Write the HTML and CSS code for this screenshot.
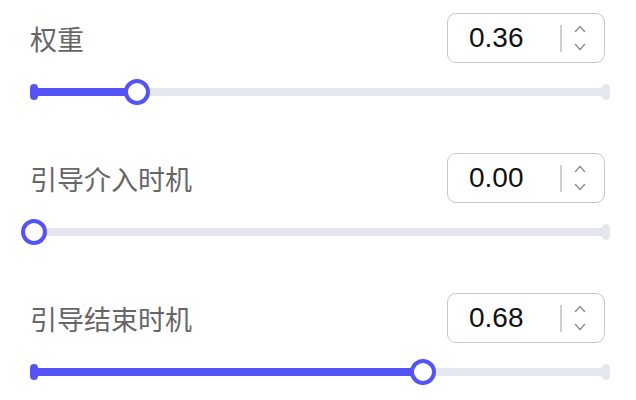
FILE: index.html
```html
<!DOCTYPE html>
<html lang="zh-CN">
<head>
    <meta charset="UTF-8">
    <meta name="viewport" content="width=device-width, initial-scale=1.0">
    <title>引导参数</title>
    <link rel="stylesheet" href="styles.css">
</head>
<body>
    <div class="panel">
        <div class="row">
            <div class="row-head">
                <span class="label">权重</span>
                <div class="number-input">
                    <span class="value">0.36</span>
                    <span class="divider"></span>
                    <span class="stepper">
                        <svg width="12" height="8" viewBox="0 0 12 8"><polyline points="1.5,6.5 6,1.5 10.5,6.5"/></svg>
                        <svg width="12" height="8" viewBox="0 0 12 8"><polyline points="1.5,1.5 6,6.5 10.5,1.5"/></svg>
                    </span>
                </div>
            </div>
            <div class="slider">
                <span class="track"></span>
                <span class="cap cap-start on"></span>
                <span class="cap cap-end"></span>
                <div class="rail">
                    <span class="fill" style="width: 18%"></span>
                    <span class="thumb" style="left: 18%"></span>
                </div>
            </div>
        </div>

        <div class="row">
            <div class="row-head">
                <span class="label">引导介入时机</span>
                <div class="number-input">
                    <span class="value">0.00</span>
                    <span class="divider"></span>
                    <span class="stepper">
                        <svg width="12" height="8" viewBox="0 0 12 8"><polyline points="1.5,6.5 6,1.5 10.5,6.5"/></svg>
                        <svg width="12" height="8" viewBox="0 0 12 8"><polyline points="1.5,1.5 6,6.5 10.5,1.5"/></svg>
                    </span>
                </div>
            </div>
            <div class="slider">
                <span class="track"></span>
                <span class="cap cap-start"></span>
                <span class="cap cap-end"></span>
                <div class="rail">
                    <span class="fill" style="width: 0%"></span>
                    <span class="thumb" style="left: 0%"></span>
                </div>
            </div>
        </div>

        <div class="row">
            <div class="row-head">
                <span class="label">引导结束时机</span>
                <div class="number-input">
                    <span class="value">0.68</span>
                    <span class="divider"></span>
                    <span class="stepper">
                        <svg width="12" height="8" viewBox="0 0 12 8"><polyline points="1.5,6.5 6,1.5 10.5,6.5"/></svg>
                        <svg width="12" height="8" viewBox="0 0 12 8"><polyline points="1.5,1.5 6,6.5 10.5,1.5"/></svg>
                    </span>
                </div>
            </div>
            <div class="slider">
                <span class="track"></span>
                <span class="cap cap-start on"></span>
                <span class="cap cap-end"></span>
                <div class="rail">
                    <span class="fill" style="width: 68%"></span>
                    <span class="thumb" style="left: 68%"></span>
                </div>
            </div>
        </div>
    </div>
</body>
</html>
```

FILE: styles.css
```css
body {
    margin: 0;
    padding: 0;
    background: #fff;
    font-family: "Noto Sans CJK SC", "Liberation Sans", sans-serif;
}
.panel {
    width: 636px;
}
.row {
    height: 140px;
    padding-top: 13px;
    box-sizing: border-box;
}
.row-head {
    display: flex;
    justify-content: space-between;
    align-items: center;
    height: 50px;
    padding: 0 31px 0 30px;
}
.label {
    font-size: 27px;
    color: #666;
    line-height: 1;
}
.number-input {
    display: flex;
    align-items: center;
    width: 158px;
    height: 50px;
    box-sizing: border-box;
    border: 1.5px solid #c6c6c9;
    border-radius: 9px;
}
.value {
    width: 91px;
    padding-left: 21px;
    font-family: "Liberation Sans", Arial, sans-serif;
    font-size: 28px;
    color: #111;
}
.divider {
    width: 1.5px;
    height: 27px;
    background: #cfcfd2;
}
.stepper {
    display: flex;
    flex-direction: column;
    align-items: center;
    gap: 10px;
    margin-left: 12px;
}
.stepper svg {
    display: block;
    fill: none;
    stroke: #8e8e93;
    stroke-width: 1.4;
    stroke-linecap: round;
    stroke-linejoin: round;
}
.slider {
    position: relative;
    height: 26px;
    margin: 16px 26px 0 30px;
}
.track {
    position: absolute;
    left: 0;
    right: 0;
    top: 9px;
    height: 8px;
    background: #e4e7ef;
}
.cap {
    position: absolute;
    top: 5px;
    width: 8px;
    height: 16px;
    border-radius: 4px;
    background: #e4e7ef;
}
.cap-start { left: 0; }
.cap-end { right: 0; }
.cap.on { background: #5353f6; }
.rail {
    position: absolute;
    left: 4px;
    right: 4px;
    top: 0;
    bottom: 0;
}
.fill {
    position: absolute;
    left: 0;
    top: 9px;
    height: 8px;
    background: #5353f6;
}
.thumb {
    position: absolute;
    top: 0;
    width: 26px;
    height: 26px;
    box-sizing: border-box;
    border: 4px solid #5353f6;
    border-radius: 50%;
    background: #fff;
    transform: translateX(-50%);
}
```
